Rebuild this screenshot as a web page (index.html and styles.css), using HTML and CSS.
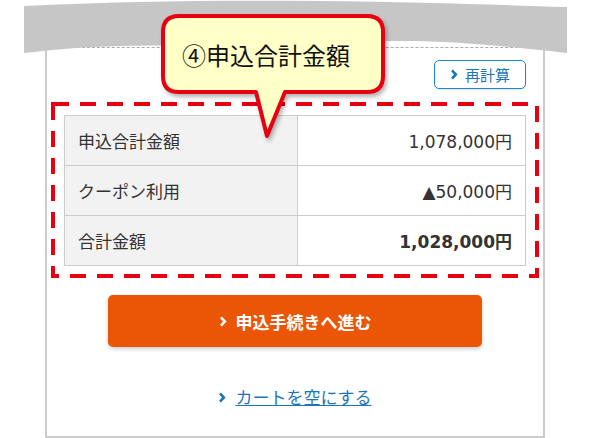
FILE: index.html
```html
<!DOCTYPE html>
<html lang="ja">
<head>
    <meta charset="UTF-8">
    <meta name="viewport" content="width=device-width, initial-scale=1.0">
    <title>カート</title>
    <link rel="stylesheet" href="styles.css">
</head>
<body>
    <div class="card">
        <div class="prev-end"></div>
        <div class="recalc-row">
            <a class="btn-recalc" href="#">
                <svg class="chev" width="8" height="11" viewBox="0 0 8 12"><path d="M1.8 1.6 L6 6 L1.8 10.4" /></svg>
                再計算
            </a>
        </div>
        <div class="total-box">
            <svg class="dash-frame" width="488" height="176" viewBox="0 0 488 176">
                <rect x="2" y="2" width="484" height="172" />
            </svg>
            <table class="total-table">
                <tr>
                    <th>申込合計金額</th>
                    <td>1,078,000円</td>
                </tr>
                <tr>
                    <th>クーポン利用</th>
                    <td>▲50,000円</td>
                </tr>
                <tr>
                    <th>合計金額</th>
                    <td class="grand">1,028,000円</td>
                </tr>
            </table>
        </div>
        <div class="apply-row">
            <a class="btn-apply" href="#">
                <svg class="chev" width="8" height="11" viewBox="0 0 8 12"><path d="M1.8 1.6 L6 6 L1.8 10.4" /></svg>
                申込手続きへ進む
            </a>
        </div>
        <div class="clear-row">
            <svg class="chev" width="8" height="11" viewBox="0 0 8 12"><path d="M1.8 1.6 L6 6 L1.8 10.4" /></svg>
            <a class="link-clear" href="#">カートを空にする</a>
        </div>
    </div>

    <!-- torn paper edge over the top of the card -->
    <svg class="torn-band" width="590" height="60" viewBox="0 0 590 60">
        <path d="M24,6 C120,1 220,0 320,1 C420,2 500,5 567,7 L567,53 C500,46 440,38 360,42 C280,46 200,44 120,46 C80,47 50,50 24,53 Z" />
    </svg>

    <!-- annotation balloon -->
    <div class="callout">
        <svg class="callout-shape" width="232" height="132" viewBox="0 0 232 132">
            <path d="M19,3 H207 Q223,3 223,19 V63 Q223,79 207,79 H125 L107,123 L96,79 H19 Q3,79 3,63 V19 Q3,3 19,3 Z" />
        </svg>
        <span class="callout-text">④申込合計金額</span>
    </div>
</body>
</html>
```

FILE: styles.css
```css
body {
    margin: 0;
    width: 590px;
    height: 438px;
    overflow: hidden;
    background-color: #fff;
    font-family: "Noto Sans CJK JP", sans-serif;
    color: #333;
    position: relative;
}
.card {
    box-sizing: border-box;
    margin: 30px 45px 0;
    height: 408px;
    border: 2px solid #ccc;
    border-top: 0;
}
.prev-end {
    height: 17px;
    margin: 0 0 0 10px;
    border-bottom: 1px dashed #aaa;
}
.chev path {
    fill: none;
    stroke: currentColor;
    stroke-width: 2.8;
}
.recalc-row {
    display: flex;
    justify-content: flex-end;
    padding-right: 17px;
    margin-top: 12px;
}
.btn-recalc {
    box-sizing: border-box;
    width: 92px;
    height: 29px;
    display: flex;
    align-items: center;
    justify-content: center;
    gap: 7px;
    border: 1px solid #1a88d0;
    border-radius: 5px;
    color: #1a74bc;
    font-size: 15px;
    text-decoration: none;
    box-shadow: 0 1px 2px rgba(0, 0, 0, 0.12);
}
.total-box {
    position: relative;
    margin: 13px 4px 0;
    padding: 13px;
}
.dash-frame {
    position: absolute;
    top: 0;
    left: 0;
}
.dash-frame rect {
    fill: none;
    stroke: #e60012;
    stroke-width: 4;
    stroke-dasharray: 16 11;
}
.total-table {
    width: 462px;
    border-collapse: collapse;
    font-family: "DejaVu Sans", "Noto Sans CJK JP", sans-serif;
    font-size: 17px;
}
.total-table th,
.total-table td {
    height: 49px;
    padding: 0 13px;
    border: 1px solid #ccc;
    font-weight: normal;
}
.total-table th {
    width: 206px;
    text-align: left;
    background-color: #f2f2f2;
    font-family: "Noto Sans CJK JP", sans-serif;
}
.total-table td {
    text-align: right;
}
.total-table td.grand {
    font-weight: bold;
}
.apply-row {
    display: flex;
    justify-content: center;
    margin-top: 16px;
}
.btn-apply {
    width: 374px;
    height: 52px;
    display: flex;
    align-items: center;
    justify-content: center;
    gap: 9px;
    background-color: #ea5506;
    border-radius: 5px;
    color: #fff;
    font-size: 17px;
    font-weight: bold;
    text-decoration: none;
    box-shadow: 0 2px 4px rgba(0, 0, 0, 0.2);
}
.clear-row {
    display: flex;
    justify-content: center;
    align-items: center;
    gap: 9px;
    margin-top: 38px;
    line-height: 24px;
    color: #1a74bc;
}
.link-clear {
    color: #1e74bb;
    font-size: 17px;
}
.torn-band {
    position: absolute;
    top: 0;
    left: 0;
}
.torn-band path {
    fill: #c6c6c6;
}
.callout {
    position: absolute;
    left: 160px;
    top: 13px;
    width: 232px;
    height: 132px;
}
.callout-shape {
    position: absolute;
    top: 0;
    left: 0;
    filter: drop-shadow(2px 3px 2px rgba(0, 0, 0, 0.3));
}
.callout-shape path {
    fill: #ffffc8;
    stroke: #e60012;
    stroke-width: 4;
    stroke-linejoin: round;
}
.callout-text {
    position: relative;
    display: block;
    padding: 27px 0 0 22px;
    font-size: 24px;
    line-height: 30px;
    color: #111;
}
```
